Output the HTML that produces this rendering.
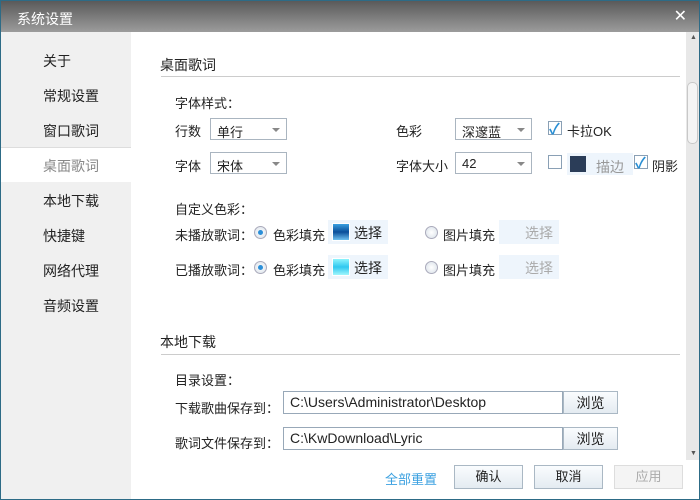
<!DOCTYPE html><html><head><meta charset="utf-8"><style>
*{margin:0;padding:0;box-sizing:border-box}
body{width:700px;height:500px;overflow:hidden;font-family:"Liberation Sans","Noto Sans CJK SC",sans-serif;font-size:13px;color:#222;background:#fff;position:relative}
.frame{position:absolute;left:0;top:0;width:700px;height:500px;border:1px solid #2d6b86}
.title{position:absolute;left:0;top:0;width:700px;height:32px;background:linear-gradient(#5a5a5a,#9c9c9c);color:#fff;font-size:14px;padding:8px 16px;border:1px solid #2d6b86;border-bottom:none}
.side{position:absolute;left:1px;top:32px;width:130px;height:467px;background:#f0f0f0}
.side div{position:absolute;left:42px;font-size:14px}
.sel{position:absolute;left:1px;top:147px;width:130px;height:35px;background:#fff;border-top:1px solid #ddd}
.a{position:absolute;white-space:nowrap}
.sb{position:absolute;border:1px solid #aab5c0;background:#fff;height:22px;font-size:13px;padding:3px 6px}
.sb:after{content:"";position:absolute;right:6px;top:9px;border:4px solid transparent;border-top:4px solid #888}
.cb{position:absolute;width:14px;height:14px;border:1px solid #8aa0b5;background:#fff}
.ck:after{content:"✓";position:absolute;left:0px;top:-4px;color:#2a8fd4;font-size:15px;font-weight:bold}
.rd{position:absolute;width:13px;height:13px;border-radius:50%;border:1px solid #aab;background:radial-gradient(#fff,#d8e0e8)}
.rd.on:after{content:"";position:absolute;left:3px;top:3px;width:5px;height:5px;border-radius:50%;background:#2b8fd8}
.pk{position:absolute;width:60px;height:24px;background:#eef5fc}
.pk i{position:absolute;left:4px;top:3px;width:18px;height:18px;border:1px solid #fff}
.pk span{position:absolute;left:26px;top:3px;font-size:14px}
.in{position:absolute;border:1px solid #98a8b8;height:23px;font-size:14px;padding:2px 6px;background:#fff}
.bt{position:absolute;border:1px solid #aab8c4;background:linear-gradient(#fafcfe,#e4ebf1);text-align:center;font-size:13px;line-height:22px}
</style></head><body>
<div class="title">系统设置<span style="position:absolute;right:12px;top:5px;font-size:16px">✕</span></div>
<div class="frame"></div>
<div class="side">
<div style="top:19px">关于</div><div style="top:54px">常规设置</div><div style="top:89px">窗口歌词</div>
<div style="top:159px">本地下载</div><div style="top:194px">快捷键</div><div style="top:229px">网络代理</div><div style="top:264px">音频设置</div>
</div>
<div class="sel"></div><div class="a" style="left:43px;top:156px;font-size:14px;color:#888">桌面歌词</div>
<div style="position:absolute;left:686px;top:32px;width:13px;height:428px;background:#e8e8e8"></div>
<div style="position:absolute;left:687px;top:82px;width:11px;height:62px;background:#f4f4f4;border:1px solid #c8c8c8;border-radius:5px"></div>
<div class="a" style="left:690px;top:34px;font-size:7px;color:#555">▲</div>
<div class="a" style="left:690px;top:450px;font-size:7px;color:#555">▼</div>

<div class="a" style="left:160px;top:55px;font-size:14px">桌面歌词</div>
<div style="position:absolute;left:161px;top:76px;width:519px;height:1px;background:#ccc"></div>
<div class="a" style="left:175px;top:93px">字体样式：</div>
<div class="a" style="left:175px;top:121px">行数</div><div class="sb" style="left:210px;top:118px;width:77px">单行</div>
<div class="a" style="left:175px;top:156px">字体</div><div class="sb" style="left:210px;top:152px;width:77px">宋体</div>
<div class="a" style="left:396px;top:121px">色彩</div><div class="sb" style="left:455px;top:118px;width:77px">深邃蓝</div>
<div class="a" style="left:396px;top:156px">字体大小</div><div class="sb" style="left:455px;top:152px;width:77px">42</div>
<div class="cb ck" style="left:548px;top:121px"></div><div class="a" style="left:567px;top:121px">卡拉OK</div>
<div class="cb" style="left:548px;top:155px"></div>
<div style="position:absolute;left:567px;top:153px;width:66px;height:22px;background:#eef5fc"></div>
<div style="position:absolute;left:570px;top:156px;width:16px;height:16px;background:#2b3d58"></div>
<div class="a" style="left:596px;top:157px;font-size:14px;color:#999">描边</div>
<div class="cb ck" style="left:634px;top:155px"></div><div class="a" style="left:652px;top:156px">阴影</div>

<div class="a" style="left:175px;top:199px">自定义色彩：</div>
<div class="a" style="left:175px;top:225px">未播放歌词：</div>
<div class="rd on" style="left:254px;top:226px"></div><div class="a" style="left:273px;top:225px">色彩填充</div>
<div class="pk" style="left:328px;top:220px"><i style="background:linear-gradient(#3aa0e0,#0a4e9a,#6cc0f0)"></i><span>选择</span></div>
<div class="rd" style="left:425px;top:226px"></div><div class="a" style="left:443px;top:225px">图片填充</div>
<div class="pk" style="left:499px;top:220px"><span style="color:#aaa">选择</span></div>
<div class="a" style="left:175px;top:260px">已播放歌词：</div>
<div class="rd on" style="left:254px;top:261px"></div><div class="a" style="left:273px;top:260px">色彩填充</div>
<div class="pk" style="left:328px;top:255px"><i style="background:linear-gradient(#8ef4fc,#30c8f0 50%,#a0f6fc)"></i><span>选择</span></div>
<div class="rd" style="left:425px;top:261px"></div><div class="a" style="left:443px;top:260px">图片填充</div>
<div class="pk" style="left:499px;top:255px"><span style="color:#aaa">选择</span></div>

<div class="a" style="left:160px;top:332px;font-size:14px">本地下载</div>
<div style="position:absolute;left:161px;top:354px;width:519px;height:1px;background:#ccc"></div>
<div class="a" style="left:175px;top:370px">目录设置：</div>
<div class="a" style="left:175px;top:398px">下载歌曲保存到：</div>
<div class="in" style="left:283px;top:391px;width:280px">C:\Users\Administrator\Desktop</div>
<div class="bt" style="left:563px;top:391px;width:55px;height:23px;font-size:14px">浏览</div>
<div class="a" style="left:175px;top:433px">歌词文件保存到：</div>
<div class="in" style="left:283px;top:427px;width:280px">C:\KwDownload\Lyric</div>
<div class="bt" style="left:563px;top:427px;width:55px;height:23px;font-size:14px">浏览</div>
<div class="a" style="left:385px;top:469px;color:#3aa0e0">全部重置</div>
<div class="bt" style="left:454px;top:465px;width:69px;height:24px">确认</div>
<div class="bt" style="left:534px;top:465px;width:69px;height:24px">取消</div>
<div class="bt" style="left:614px;top:465px;width:69px;height:24px;background:#f4f4f4;border-color:#ddd;color:#aaa">应用</div>
</body></html>
